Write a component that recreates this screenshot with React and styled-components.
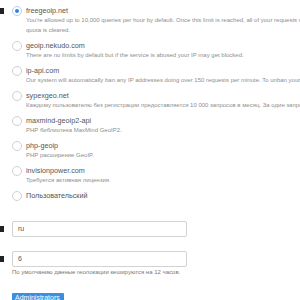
import React from "react";
import styled, { createGlobalStyle } from "styled-components";

const Global = createGlobalStyle`
  html, body { margin: 0; padding: 0; background: #fff; }
  body { font-family: "Liberation Sans", Arial, sans-serif; color: #333; overflow: hidden; }
`;

const Page = styled.div`
  width: 300px;
  height: 300px;
  overflow: hidden;
  padding-top: 6px;
  box-sizing: border-box;
`;

const FormGroup = styled.div`
  display: grid;
  grid-template-columns: 12px 1fr;
  margin-bottom: ${(p) => p.$mb || 0}px;
`;

const LabelStub = styled.span`
  display: block;
  width: 4px;
  height: 6px;
  background: #222;
  margin-top: ${(p) => p.$top || 0}px;
`;

const RadioList = styled.div`
  display: flex;
  flex-direction: column;
  gap: 5.6px;
`;

const RadioItem = styled.div`
  display: grid;
  grid-template-columns: 14px 1fr;
`;

const RadioCircle = styled.span`
  width: 10px;
  height: 10px;
  box-sizing: border-box;
  border-radius: 50%;
  border: 1px solid ${(p) => (p.$checked ? "#b3d0ef" : "#d0d0d0")};
  background: #fff;
  display: flex;
  align-items: center;
  justify-content: center;
  &::after {
    content: "";
    display: ${(p) => (p.$checked ? "block" : "none")};
    width: 4px;
    height: 4px;
    border-radius: 50%;
    background: #3584da;
  }
`;

const ItemText = styled.div`
  white-space: nowrap;
`;

const ItemLabel = styled.div`
  font-size: 7.2px;
  line-height: 10px;
  color: #555;
`;

const ItemDesc = styled.div`
  font-size: 6px;
  line-height: 9.5px;
  color: #8e8e8e;
`;

const Field = styled.div`
  display: flex;
  flex-direction: column;
`;

const TextInput = styled.div`
  width: 175px;
  height: 16px;
  box-sizing: border-box;
  border: 1px solid #d2d2d2;
  border-radius: 2px;
  padding-left: 5px;
  font-size: 7px;
  line-height: 14px;
  color: #555;
`;

const Help = styled.div`
  font-size: 6px;
  line-height: 9px;
  color: #777;
  margin-top: 1px;
`;

const Tag = styled.span`
  display: block;
  background: #3c8ee0;
  color: #fff;
  font-size: 7px;
  line-height: 10px;
  padding: 0 3px;
  border-radius: 1px;
  width: 52px;
  box-sizing: border-box;
  white-space: nowrap;
  margin-top: 1px;
`;

const items = [
  {
    name: "freegeoip.net",
    checked: true,
    desc: [
      "You're allowed up to 10,000 queries per hour by default. Once this limit is reached, all of your requests will result in HTTP 403, forbidden, until your",
      "quota is cleared.",
    ],
  },
  {
    name: "geoip.nekudo.com",
    desc: ["There are no limits by default but if the service is abused your IP may get blocked."],
  },
  {
    name: "ip-api.com",
    desc: [
      "Our system will automatically ban any IP addresses doing over 150 requests per minute. To unban your IP click here.",
    ],
  },
  {
    name: "sypexgeo.net",
    desc: [
      "Каждому пользователю без регистрации предоставляется 10 000 запросов в месяц. За один запрос можно получить информацию",
    ],
  },
  { name: "maxmind-geoip2-api", desc: ["PHP библиотека MaxMind GeoIP2."] },
  { name: "php-geoip", desc: ["PHP расширение GeoIP."] },
  { name: "invisionpower.com", desc: ["Требуется активная лицензия."] },
  { name: "Пользовательский", desc: [] },
];

export default function App() {
  return (
    <Page>
      <Global />
      <FormGroup $mb={20}>
        <LabelStub $top={2} />
        <RadioList>
          {items.map((it) => (
            <RadioItem key={it.name}>
              <RadioCircle $checked={it.checked} />
              <ItemText>
                <ItemLabel>{it.name}</ItemLabel>
                {it.desc.map((d) => (
                  <ItemDesc key={d}>{d}</ItemDesc>
                ))}
              </ItemText>
            </RadioItem>
          ))}
        </RadioList>
      </FormGroup>
      <FormGroup $mb={14}>
        <LabelStub $top={5} />
        <Field>
          <TextInput>ru</TextInput>
        </Field>
      </FormGroup>
      <FormGroup $mb={15}>
        <LabelStub $top={5} />
        <Field>
          <TextInput>6</TextInput>
          <Help>По умолчанию данные геолокации кешируются на 12 часов.</Help>
        </Field>
      </FormGroup>
      <FormGroup>
        <span />
        <div>
          <Tag>Administrators</Tag>
        </div>
      </FormGroup>
    </Page>
  );
}
